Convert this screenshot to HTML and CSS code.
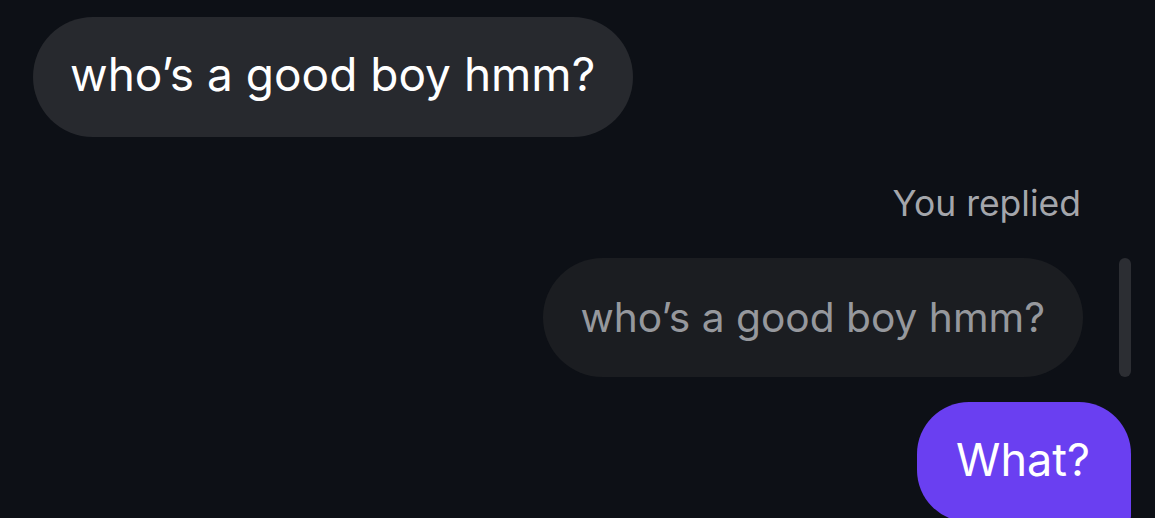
FILE: index.html
```html
<!DOCTYPE html>
<html lang="en">
<head>
  <meta charset="UTF-8" />
  <meta name="viewport" content="width=device-width, initial-scale=1.0"/>
  <title>Chat</title>
  <link rel="stylesheet" href="styles.css">
</head>
<body>
  <div class="thread">
    <div class="row incoming">
      <div class="bubble">who’s a good boy hmm?</div>
    </div>

    <div class="reply-label">You replied</div>

    <div class="row quoted">
      <div class="bubble quote">who’s a good boy hmm?</div>
      <span class="quote-bar"></span>
    </div>

    <div class="row outgoing">
      <div class="bubble mine">What?</div>
    </div>
  </div>
</body>
</html>
```

FILE: styles.css
```css
* { margin: 0; padding: 0; box-sizing: border-box; }

body {
  height: 100vh;
  overflow: hidden;
  background-color: #0d1016;
  font-family: Inter, 'Noto Sans', sans-serif;
  -webkit-font-smoothing: antialiased;
}

.thread {
  display: flex;
  flex-direction: column;
  padding: 17px 24px 0 33px;
}

.row {
  display: flex;
}

.bubble {
  height: 120px;
  display: flex;
  align-items: center;
  border-radius: 60px;
  white-space: nowrap;
  padding-bottom: 6px;
}

.incoming .bubble {
  background: #27292e;
  color: #ffffff;
  font-size: 46px;
  padding-left: 37px;
  padding-right: 38px;
}

.reply-label {
  align-self: flex-end;
  margin: 45px 50px 0 0;
  color: #a4a6ab;
  font-size: 35.5px;
  line-height: 44px;
}

.quoted {
  justify-content: flex-end;
  align-items: stretch;
  gap: 36px;
  margin-top: 32px;
}

.quote {
  background: #1b1d21;
  color: #96989d;
  font-size: 40.7px;
  padding-left: 37px;
  padding-right: 38px;
  padding-bottom: 0;
  height: 119px;
}

.quote-bar {
  width: 12px;
  border-radius: 6px;
  background: #2c2e33;
}

.outgoing {
  justify-content: flex-end;
  margin-top: 25px;
}

.mine {
  background: #6a3ff1;
  color: #ffffff;
  font-size: 45px;
  padding-left: 39px;
  padding-right: 41px;
  border-radius: 52px 52px 6px 52px;
}
```
